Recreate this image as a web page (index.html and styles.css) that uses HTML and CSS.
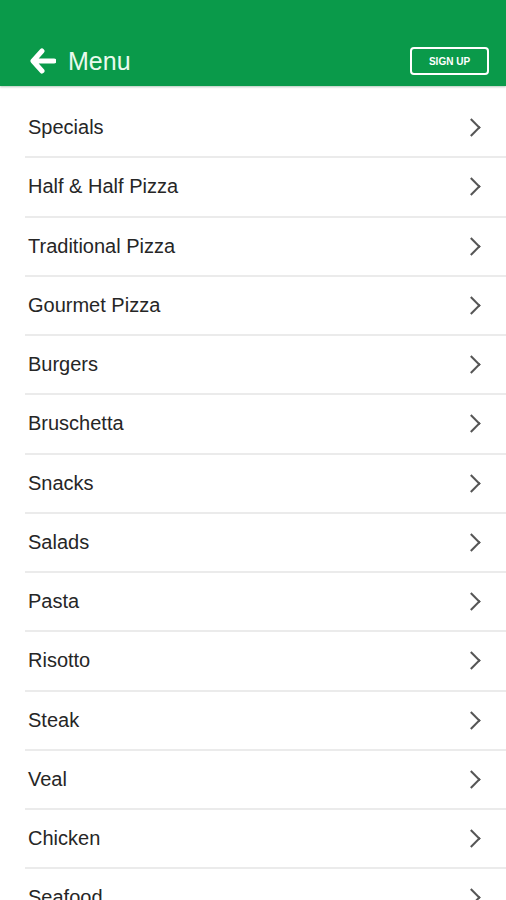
FILE: index.html
```html
<!DOCTYPE html>
<html lang="en">
<head>
  <meta charset="UTF-8">
  <title>Menu</title>
  <link rel="stylesheet" href="styles.css">
</head>
<body>
  <header class="topbar">
    <a class="back" href="#">
      <svg class="back-icon" width="26" height="26" viewBox="0 0 26 26">
        <path d="M12 3 L3 13 L12 23 M4 13 L24 13" fill="none" stroke="#fff" stroke-width="5" stroke-linecap="round" stroke-linejoin="round"/>
      </svg>
      <span class="title">Menu</span>
    </a>
    <button class="signup">SIGN UP</button>
  </header>

  <ul class="menu">
    <li><span>Specials</span><i class="chev"></i></li>
    <li><span>Half &amp; Half Pizza</span><i class="chev"></i></li>
    <li><span>Traditional Pizza</span><i class="chev"></i></li>
    <li><span>Gourmet Pizza</span><i class="chev"></i></li>
    <li><span>Burgers</span><i class="chev"></i></li>
    <li><span>Bruschetta</span><i class="chev"></i></li>
    <li><span>Snacks</span><i class="chev"></i></li>
    <li><span>Salads</span><i class="chev"></i></li>
    <li><span>Pasta</span><i class="chev"></i></li>
    <li><span>Risotto</span><i class="chev"></i></li>
    <li><span>Steak</span><i class="chev"></i></li>
    <li><span>Veal</span><i class="chev"></i></li>
    <li><span>Chicken</span><i class="chev"></i></li>
    <li><span>Seafood</span><i class="chev"></i></li>
  </ul>
</body>
</html>
```

FILE: styles.css
```css
body {
  margin: 0;
  font-family: "Liberation Sans", Arial, sans-serif;
  background: #fff;
  color: #222;
  height: 900px;
  overflow: hidden;
}
.topbar {
  height: 86px;
  background: #0a9a4a;
  display: flex;
  align-items: flex-end;
  justify-content: space-between;
  padding: 0 17px 10px 30px;
  box-sizing: border-box;
  box-shadow: 0 1px 2px rgba(0,80,30,0.3);
}
.back {
  display: flex;
  align-items: center;
  text-decoration: none;
  color: #fff;
  height: 30px;
}
.back-icon {
  margin-right: 12px;
}
.title {
  font-size: 25px;
  color: #eafaee;
}
.signup {
  width: 79px;
  height: 28px;
  margin-bottom: 1px;
  background: transparent;
  border: 2px solid #fff;
  border-radius: 4px;
  color: #fff;
  font-family: "Liberation Sans", Arial, sans-serif;
  font-weight: bold;
  font-size: 10px;
  padding: 0;
}
.menu {
  list-style: none;
  margin: 0;
  padding: 13px 0 0 25px;
}
.menu li {
  height: 57.25px;
  border-bottom: 2px solid #ebebeb;
  display: flex;
  align-items: center;
  justify-content: space-between;
  padding: 0 27px 0 3px;
  font-size: 20px;
  color: #262626;
}
.chev {
  width: 11px;
  height: 11px;
  border-top: 2px solid #555;
  border-right: 2px solid #555;
  transform: rotate(45deg);
  margin-right: 1px;
}
```
